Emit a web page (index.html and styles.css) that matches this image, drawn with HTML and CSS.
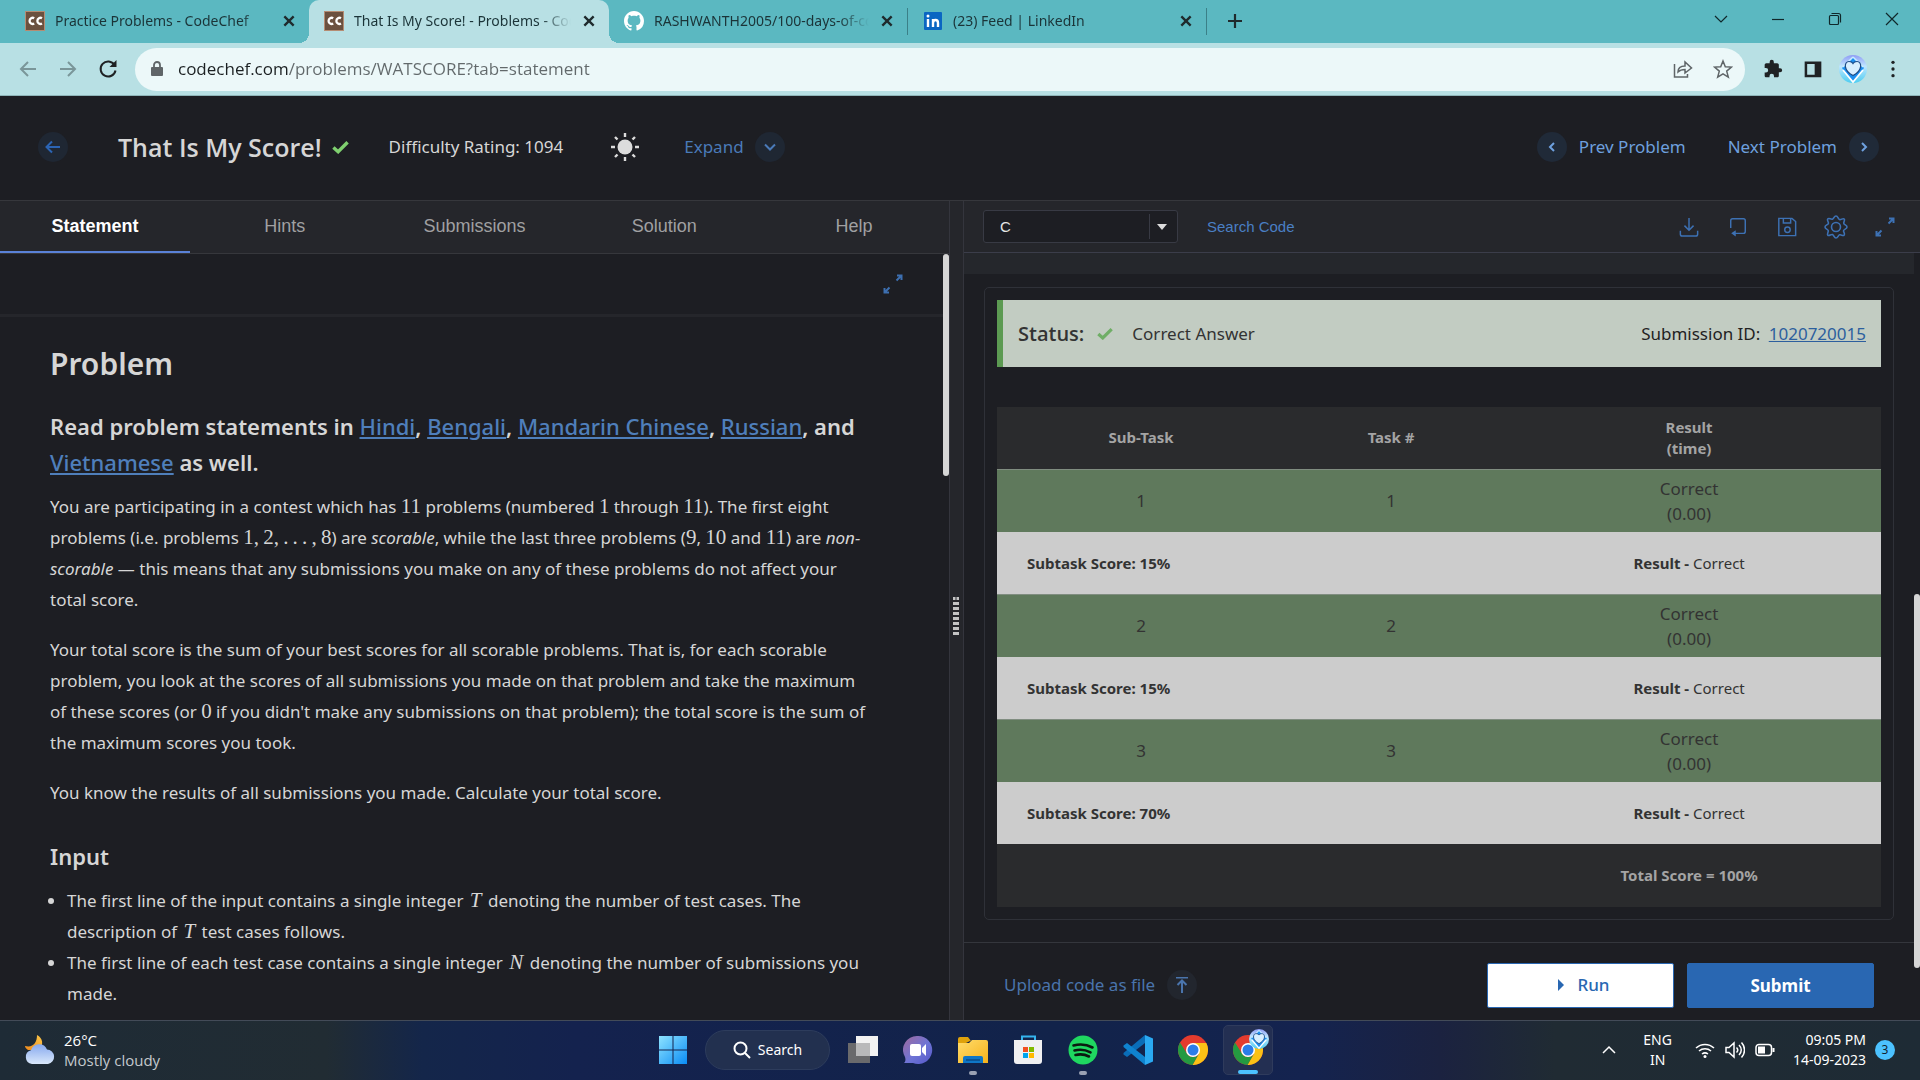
FILE: index.html
```html
<!DOCTYPE html>
<html lang="en">
<head>
<meta charset="utf-8">
<title>That Is My Score! - Problems - CodeChef</title>
<link rel="stylesheet" href="styles.css">
</head>
<body>
<svg class="defs" aria-hidden="true">
  <defs>
    <linearGradient id="win" x1="0" y1="0" x2="1" y2="1"><stop offset="0" stop-color="#8ee3ff"/><stop offset="1" stop-color="#0a8cf5"/></linearGradient>
    <linearGradient id="cloud" x1="0" y1="0" x2="0" y2="1"><stop offset="0" stop-color="#86a8ee"/><stop offset="1" stop-color="#d9e8fb"/></linearGradient>
    <linearGradient id="moon" x1="0" y1="1" x2="1" y2="0"><stop offset="0" stop-color="#f08a1c"/><stop offset="1" stop-color="#fbc84a"/></linearGradient>
    <linearGradient id="chat" x1="0" y1="0" x2="1" y2="1"><stop offset="0" stop-color="#a06a9c"/><stop offset=".55" stop-color="#6d74d6"/><stop offset="1" stop-color="#5557c8"/></linearGradient>
    <linearGradient id="folder" x1="0" y1="0" x2="1" y2="1"><stop offset="0" stop-color="#ffdc6b"/><stop offset="1" stop-color="#f6b21b"/></linearGradient>
    <linearGradient id="gem" x1="0" y1="0" x2="0" y2="1"><stop offset="0" stop-color="#8f9cf5"/><stop offset=".4" stop-color="#bfe6ff"/><stop offset="1" stop-color="#4ccdf2"/></linearGradient>
  </defs>
  <symbol id="i-close" viewBox="0 0 12 12"><path d="M2 2l8 8M10 2l-8 8" stroke="#1f2a2d" stroke-width="2" fill="none"/></symbol>
  <symbol id="i-expand" viewBox="0 0 20 20"><path d="M14 1.500h4.500V6M18.500 1.500L13.500 6.500M6 18.500H1.500V14M1.500 18.500l5-5" stroke="currentColor" stroke-width="2" fill="none"/></symbol>
  <symbol id="i-check" viewBox="0 0 18 14"><path d="M1.500 7.500l5 4.500L16.500 2" stroke="currentColor" stroke-width="3.600" fill="none"/></symbol>
  <symbol id="i-chef" viewBox="0 0 20 20"><rect x=".5" y=".5" width="19" height="19" fill="#6b513f" stroke="#b58c73"/><path d="M9.200 7.200A3.100 3.100 0 1 0 9.200 12.600M17 7.200A3.100 3.100 0 1 0 17 12.600" stroke="#fff" stroke-width="2.300" fill="none"/></symbol>
  <symbol id="i-chrome" viewBox="0 0 30 30"><circle cx="15" cy="15" r="15" fill="#e33b2e"/><path d="M15 8h13.300A15 15 0 0 1 14.500 30L21.100 18.500z" fill="#fbc116"/><path d="M2 7.500L8.900 18.500a7 7 0 0 0 12.200 0L14.500 30A15 15 0 0 1 2 7.500z" fill="#249a41"/><circle cx="15" cy="15" r="7" fill="#fff"/><circle cx="15" cy="15" r="5.500" fill="#2b7de9"/></symbol>
  <symbol id="i-gem" viewBox="0 0 28 28"><circle cx="14" cy="14" r="14" fill="url(#gem)"/><path d="M14 2l11 11-11 14L3 13z" fill="#1c8ff0"/><path d="M4 15l10 12 10-12" stroke="#fff" stroke-width="1.800" fill="none"/><path d="M14 2L4 12M14 2l10 10" stroke="#c8ecff" stroke-width="1.500"/><path d="M14 20.500c-10-5-9-14-4-14 2 0 3.500 1 4 2 .5-1 2-2 4-2 5 0 6 9-4 14z" fill="#d8efff" stroke="#1d4b86" stroke-width="1.200"/></symbol>
</svg>

<div class="tabstrip">
  <div class="tab"><svg class="fav"><use href="#i-chef"/></svg><span class="tab-title">Practice Problems - CodeChef</span><button class="tab-close" aria-label="Close tab"><svg><use href="#i-close"/></svg></button></div>
  <div class="tab active"><svg class="fav"><use href="#i-chef"/></svg><span class="tab-title">That Is My Score! - Problems - CodeChef</span><button class="tab-close" aria-label="Close tab"><svg><use href="#i-close"/></svg></button></div>
  <div class="tab sep"><svg class="fav" viewBox="0 0 16 16"><path fill="#fff" d="M8 0C3.580 0 0 3.580 0 8c0 3.540 2.290 6.530 5.470 7.590.4.070.55-.17.55-.38 0-.19-.01-.82-.01-1.490-2.010.37-2.530-.49-2.690-.94-.09-.23-.48-.94-.82-1.130-.28-.15-.68-.52-.01-.53.63-.01 1.080.58 1.230.82.72 1.210 1.870.87 2.330.66.07-.52.28-.87.51-1.070-1.780-.2-3.640-.89-3.640-3.950 0-.87.31-1.590.82-2.150-.08-.2-.36-1.020.08-2.120 0 0 .67-.21 2.200.82.64-.18 1.320-.27 2-.27s1.360.09 2 .27c1.530-1.040 2.200-.82 2.200-.82.44 1.100.16 1.920.08 2.120.51.56.82 1.270.82 2.150 0 3.070-1.870 3.750-3.650 3.950.29.25.54.73.54 1.480 0 1.070-.01 1.930-.01 2.200 0 .21.15.46.55.38A8.010 8.010 0 0 0 16 8c0-4.420-3.580-8-8-8z"/></svg><span class="tab-title">RASHWANTH2005/100-days-of-code</span><button class="tab-close" aria-label="Close tab"><svg><use href="#i-close"/></svg></button></div>
  <div class="tab sep"><svg class="fav" viewBox="0 0 20 20"><rect x="1" y="1" width="18" height="18" rx="1" fill="#0a66c2"/><path d="M5 8v8M10 16V8M10 12c0-4 5-4 5 0v4" stroke="#fff" stroke-width="2.400" fill="none"/><circle cx="5" cy="5" r="1.500" fill="#fff"/></svg><span class="tab-title">(23) Feed | LinkedIn</span><button class="tab-close" aria-label="Close tab"><svg><use href="#i-close"/></svg></button></div>
  <button class="new-tab" aria-label="New tab"><svg viewBox="0 0 16 16"><path d="M8 1v14M1 8h14" stroke="#1f2a2d" stroke-width="2.200"/></svg></button>
  <div class="window-controls">
    <button aria-label="Search tabs"><svg viewBox="0 0 14 14"><path d="M1 4l6 6 6-6" /></svg></button>
    <button aria-label="Minimize"><svg viewBox="0 0 14 14"><path d="M1 7.500h12"/></svg></button>
    <button aria-label="Restore"><svg viewBox="0 0 14 14"><rect x="1.500" y="3.500" width="9" height="9" rx="1"/><path d="M3.500 1.500h7a2 2 0 0 1 2 2v7"/></svg></button>
    <button aria-label="Close"><svg viewBox="0 0 14 14"><path d="M1 1l12 12M13 1L1 13"/></svg></button>
  </div>
</div>

<div class="toolbar">
  <button class="nav dim" aria-label="Back"><svg viewBox="0 0 20 20"><path d="M18 10H3M10 3l-7 7 7 7"/></svg></button>
  <button class="nav dim" aria-label="Forward"><svg viewBox="0 0 20 20"><path d="M2 10h15M10 3l7 7-7 7"/></svg></button>
  <button class="nav" aria-label="Reload"><svg viewBox="0 0 20 20"><path d="M16.500 6A7.500 7.500 0 1 0 17.500 11.500" /><path d="M18.500 1v7h-7z" fill="#1f2224" stroke="none"/></svg></button>
  <div class="omnibox">
    <svg class="lock" viewBox="0 0 12 16"><rect x="0" y="6" width="12" height="9" rx="1" fill="#5f6568"/><path d="M3 7V4a3 3 0 0 1 6 0v3" stroke="#5f6568" stroke-width="1.800" fill="none"/></svg>
    <input class="url" type="text" aria-label="Address" value="codechef.com/problems/WATSCORE?tab=statement">
    <button aria-label="Share"><svg viewBox="0 0 20 20"><path d="M1.500 5v13h13v-3M5 13c0-4 3-6 7-6V3l6.500 6-6.500 5v-3.500c-3 0-5 .5-7 2.500z"/></svg></button>
    <button aria-label="Bookmark"><svg viewBox="0 0 20 20"><path d="M10 2l2.300 5.700 6.200.4-4.800 4 1.600 6L10 14.800 4.700 18.100l1.600-6-4.800-4 6.200-.4z"/></svg></button>
  </div>
  <button class="ext" aria-label="Extensions"><svg viewBox="0 0 24 24"><path fill="#1f2224" d="M20.500 11H19V7c0-1.100-.9-2-2-2h-4V3.500a2.500 2.500 0 0 0-5 0V5H4c-1.100 0-2 .9-2 2v3.800h1.500a2.700 2.700 0 0 1 0 5.400H2V20c0 1.100.9 2 2 2h3.800v-1.500a2.700 2.700 0 0 1 5.400 0V22H17c1.100 0 2-.9 2-2v-4h1.500a2.500 2.500 0 0 0 0-5z"/></svg></button>
  <button class="ext" aria-label="Side panel"><svg viewBox="0 0 24 24"><path fill="#1f2224" fill-rule="evenodd" d="M2 3h20v19H2zM5 6v13h9V6z"/></svg></button>
  <button class="ext wide" aria-label="Profile"><svg><use href="#i-gem"/></svg></button>
  <button class="ext" aria-label="Menu"><svg viewBox="0 0 24 24" fill="#1f2224"><circle cx="12" cy="4" r="2"/><circle cx="12" cy="12" r="2"/><circle cx="12" cy="20" r="2"/></svg></button>
</div>

<header class="problem-bar">
  <button class="round back" aria-label="Back"><svg viewBox="0 0 16 16"><path d="M15 8H2M7 2.500L1.500 8 7 13.500"/></svg></button>
  <h1>That Is My Score!</h1>
  <svg class="solved"><use href="#i-check"/></svg>
  <span class="rating">Difficulty Rating: 1094</span>
  <button class="theme" aria-label="Theme"><svg viewBox="0 0 28 28"><circle cx="14" cy="14" r="7.500" fill="#dcdcdc"/><path d="M14 0v4M14 24v4M0 14h4M24 14h4M4 4l2.500 2.500M21.500 21.500L24 24M24 4l-2.500 2.500M6.500 21.500L4 24" stroke="#dcdcdc" stroke-width="2.400"/></svg></button>
  <button class="expand">Expand <span class="round"><svg viewBox="0 0 16 16"><path d="M3 5.500l5 5 5-5"/></svg></span></button>
  <nav class="pager">
    <a href="#prev"><span class="round"><svg viewBox="0 0 16 16"><path d="M10 4L6 8l4 4"/></svg></span>Prev Problem</a>
    <a href="#next">Next Problem<span class="round"><svg viewBox="0 0 16 16"><path d="M6 4l4 4-4 4"/></svg></span></a>
  </nav>
</header>

<main class="split">
  <section class="left">
    <nav class="tabs">
      <a class="current" href="#statement">Statement</a><a href="#hints">Hints</a><a href="#submissions">Submissions</a><a href="#solution">Solution</a><a href="#help">Help</a>
    </nav>
    <div class="statement">
      <div class="scroll-thumb"></div>
      <div class="statement-tools"><button aria-label="Full screen"><svg><use href="#i-expand"/></svg></button></div>
      <article>
        <h2>Problem</h2>
        <h3>Read problem statements in <a href="#hi">Hindi</a>, <a href="#bn">Bengali</a>, <a href="#zh">Mandarin Chinese</a>, <a href="#ru">Russian</a>, and <a href="#vi">Vietnamese</a> as well.</h3>
        <p>You are participating in a contest which has <span class="math">11</span> problems (numbered <span class="math">1</span> through <span class="math">11</span>). The first eight problems (i.e. problems <span class="math">1,&#8201;2,&#8201;.&#8201;.&#8201;.&#8201;,&#8201;8</span>) are <em>scorable</em>, while the last three problems (<span class="math">9</span>, <span class="math">10</span> and <span class="math">11</span>) are <em>non-scorable</em> — this means that any submissions you make on any of these problems do not affect your total score.</p>
        <p>Your total score is the sum of your best scores for all scorable problems. That is, for each scorable problem, you look at the scores of all submissions you made on that problem and take the maximum of these scores (or <span class="math">0</span> if you didn't make any submissions on that problem); the total score is the sum of the maximum scores you took.</p>
        <p>You know the results of all submissions you made. Calculate your total score.</p>
        <h3 class="sub">Input</h3>
        <ul>
          <li>The first line of the input contains a single integer <i class="math">T</i> denoting the number of test cases. The description of <i class="math">T</i> test cases follows.</li>
          <li>The first line of each test case contains a single integer <i class="math">N</i> denoting the number of submissions you made.</li>
        </ul>
      </article>
    </div>
  </section>

  <div class="gutter"><span class="grip"></span></div>

  <section class="right">
    <div class="scroll-thumb"></div>
    <div class="editor-bar">
      <div class="lang"><select aria-label="Language"><option>C</option></select><span class="arrow"></span></div>
      <a class="search-code" href="#search">Search Code</a>
      <div class="tools">
        <button aria-label="Download"><svg viewBox="0 0 22 22"><path d="M11 1v13M6 9.500l5 5 5-5M1.500 15v4a2 2 0 0 0 2 2h15a2 2 0 0 0 2-2v-4"/></svg></button>
        <button aria-label="Reset"><svg viewBox="0 0 22 22"><path d="M3 12V4a2 2 0 0 1 2-2h12a2 2 0 0 1 2 2v12a2 2 0 0 1-2 2H6"/><path d="M8.500 14.500v7L3.500 18z" fill="currentColor" stroke="none"/></svg></button>
        <button aria-label="Save"><svg viewBox="0 0 22 22"><path d="M2 1.500h14.500L20.500 5v15.500H2zM7 1.500v5h8v-5"/><circle cx="11.500" cy="14" r="3"/></svg></button>
        <button class="gear" aria-label="Settings"><svg viewBox="0 0 24 24"><path d="M12 1c2 0 2 3 3.500 3.600S19 2.700 20.200 4s-.9 3-.4 4.500S23 10 23 12s-2.800 2-3.400 3.500 2 3.500.6 4.700-3-.9-4.600-.4S14 23 12 23s-2-2.800-3.500-3.400-3.500 2-4.700.6.900-3 .4-4.600S1 14 1 12s2.800-2 3.400-3.500-2-3.500-.6-4.700 3 .9 4.600.4S10 1 12 1z"/><circle cx="12" cy="12" r="4.500"/></svg></button>
        <button aria-label="Full screen"><svg><use href="#i-expand"/></svg></button>
      </div>
    </div>
    <div class="console-edge"></div>
    <div class="results">
      <div class="card">
        <div class="status">
          <strong>Status:</strong>
          <svg class="ok"><use href="#i-check"/></svg>
          <span class="verdict">Correct Answer</span>
          <span class="sid">Submission ID: <a href="#submission">1020720015</a></span>
        </div>
        <table>
          <colgroup><col class="c1"><col class="c2"><col class="c3"></colgroup>
          <thead><tr><th>Sub-Task</th><th>Task #</th><th>Result<br>(time)</th></tr></thead>
          <tbody>
            <tr class="pass"><td>1</td><td>1</td><td>Correct<br>(0.00)</td></tr>
            <tr class="score"><td colspan="2"><b>Subtask Score: 15%</b></td><td><b>Result - </b>Correct</td></tr>
            <tr class="pass"><td>2</td><td>2</td><td>Correct<br>(0.00)</td></tr>
            <tr class="score"><td colspan="2"><b>Subtask Score: 15%</b></td><td><b>Result - </b>Correct</td></tr>
            <tr class="pass"><td>3</td><td>3</td><td>Correct<br>(0.00)</td></tr>
            <tr class="score"><td colspan="2"><b>Subtask Score: 70%</b></td><td><b>Result - </b>Correct</td></tr>
          </tbody>
          <tfoot><tr><th colspan="2"></th><th>Total Score = 100%</th></tr></tfoot>
        </table>
      </div>
    </div>
    <footer class="actions">
      <button class="upload">Upload code as file <span class="round"><svg viewBox="0 0 16 16"><path d="M2 0.500h12M8 16V3.500M3.500 8L8 3.500 12.500 8"/></svg></span></button>
      <button class="run"><span class="play"></span>Run</button>
      <button class="submit">Submit</button>
    </footer>
  </section>
</main>

<div class="taskbar">
  <div class="weather">
    <svg viewBox="0 0 30 30"><path d="M12 0c6 3 7 10 2 15H3c-2-1-3-3-3-4 8 2 12-3 12-11z" fill="url(#moon)"/><path d="M7 29a7 7 0 0 1-1-13.700A8.500 8.500 0 0 1 22 14.500 7.300 7.300 0 0 1 23 29z" fill="url(#cloud)"/></svg>
    <div class="lines"><span>26°C</span><span class="muted">Mostly cloudy</span></div>
  </div>
  <div class="apps">
    <button aria-label="Start"><svg viewBox="0 0 28 28"><path d="M0 0h13.500v13.500H0zM14.500 0H28v13.500H14.500zM0 14.500h13.500V28H0zM14.500 14.500H28V28H14.500z" fill="url(#win)"/></svg></button>
    <button class="search"><svg viewBox="0 0 18 18"><circle cx="7.500" cy="7.500" r="6"/><path d="M12 12l5 5"/></svg>Search</button>
    <button aria-label="Task view"><svg viewBox="0 0 30 30"><rect x="0" y="8" width="22" height="20" fill="#6a6a6c"/><rect x="8" y="1" width="22" height="20" fill="#f2f2f2"/><path d="M8 8h14v13H8z" fill="#b9b9ba"/></svg></button>
    <button aria-label="Chat"><svg viewBox="0 0 30 30"><path d="M15 1a14 14 0 1 1-5 27H1c2-2 1.500-4 1-6A14 14 0 0 1 15 1z" fill="url(#chat)"/><rect x="7" y="9" width="11" height="12" rx="2" fill="#fff"/><path d="M19 13l4-4v12l-4-4z" fill="#fff"/></svg></button>
    <button class="open" aria-label="File Explorer"><svg viewBox="0 0 30 30"><path d="M0 4a2 2 0 0 1 2-2h8l3 4h-1L0 12z" fill="#dfa20c"/><path d="M0 8h11l3-3h14a2 2 0 0 1 2 2v21H0z" fill="url(#folder)"/><path d="M5 28v-5a2 2 0 0 1 2-2h16a2 2 0 0 1 2 2v5z" fill="#0f76c6"/><path d="M8 25h14" stroke="#0a4b87" stroke-width="1.500"/></svg></button>
    <button aria-label="Store"><svg viewBox="0 0 30 30"><path d="M9 7V1.500h13V7" stroke="#34b4ef" stroke-width="2" fill="none"/><path d="M1 5h28v21a3 3 0 0 1-3 3H4a3 3 0 0 1-3-3z" fill="#f0f0f2"/><path d="M10 12h5v5h-5z" fill="#f25022"/><path d="M16 12h5v5h-5z" fill="#7fba00"/><path d="M10 18h5v5h-5z" fill="#00a4ef"/><path d="M16 18h5v5h-5z" fill="#ffb900"/></svg></button>
    <button class="open" aria-label="Spotify"><svg viewBox="0 0 30 30"><circle cx="15" cy="15" r="14.500" fill="#1fd760"/><path d="M5.500 10.500c7-2 13.500-1 19 2M6.500 15.500c6-1.600 11-.8 16 1.800M7.500 20c5-1.200 9.500-.6 13.500 1.500" stroke="#0b1a10" stroke-width="2.600" fill="none" stroke-linecap="round"/></svg></button>
    <button aria-label="Visual Studio Code"><svg viewBox="0 0 30 30"><path d="M22 0v8L4 22l-3.500-2.500v-1.500z" fill="#0a6db8"/><path d="M22 30v-8L4 8 .5 10.500V12z" fill="#0f83cf"/><path d="M22 0l8 3.500v23L22 30z" fill="#2aa9f2"/></svg></button>
    <button aria-label="Chrome"><svg><use href="#i-chrome"/></svg></button>
    <button class="focused" aria-label="Chrome window"><svg><use href="#i-chrome"/></svg><svg class="badge"><use href="#i-gem"/></svg></button>
  </div>
  <div class="tray">
    <svg class="chev" viewBox="0 0 14 14"><path d="M1 10l6-6 6 6"/></svg>
    <div class="lines lang-id"><span>ENG</span><span>IN</span></div>
    <svg class="sys" viewBox="0 0 20 20"><path d="M1 8a13 13 0 0 1 18 0M4 11a9 9 0 0 1 12 0M7 14a5 5 0 0 1 6 0"/><circle cx="10" cy="16.500" r="1.500" fill="#fff" stroke="none"/></svg>
    <svg class="sys" viewBox="0 0 20 20"><path d="M1 7.500h3L9 3v14l-5-4.500H1zM11.500 7.500c1.500 1.500 1.500 3.500 0 5M14 5c3 3 3 7 0 10M16.500 2.500c4 4.500 4 10.500 0 15"/></svg>
    <svg class="sys" viewBox="0 0 20 20"><rect x="1" y="4.500" width="15.500" height="11" rx="3"/><path d="M3 6.500h7v7H3zM17.500 8h2v4h-2z" fill="#fff" stroke="none"/></svg>
    <div class="lines clock"><span>09:05 PM</span><span>14-09-2023</span></div>
    <span class="count">3</span>
  </div>
</div>
</body>
</html>
```
FILE: styles.css
```css
* { box-sizing: border-box; }

body {
  margin: 0;
  height: 100vh;
  display: flex;
  flex-direction: column;
  overflow: hidden;
  background: #1d1e23;
  color: #d6d6d6;
  font: 17px/24px "Noto Sans", "Open Sans", sans-serif;
}

button {
  border: 0;
  padding: 0;
  background: none;
  font: inherit;
  color: inherit;
  display: flex;
  align-items: center;
  justify-content: center;
}

svg { display: block; flex: none; }
.defs { position: absolute; width: 0; height: 0; }
a { color: inherit; text-decoration: none; }

/* Browser tabs */
.tabstrip {
  height: 43px;
  flex: none;
  display: flex;
  padding-left: 10px;
  background: #5bb8c1;
  color: #1b3438;
  font: 14px/20px "Noto Sans", "Open Sans", sans-serif;
}
.tab {
  flex: 0 1 299px;
  min-width: 0;
  display: flex;
  align-items: center;
  gap: 10px;
  padding: 0 12px 2px 15px;
  position: relative;
}
.tab.active { background: #b8e0e4; border-radius: 10px 10px 0 0; flex-basis: 300px; }
.tab.active::before,
.tab.active::after {
  content: "";
  position: absolute;
  bottom: 0;
  width: 10px;
  height: 10px;
}
.tab.active::before { right: 100%; background: radial-gradient(circle at 0 0, transparent 10px, #b8e0e4 10px); }
.tab.active::after { left: 100%; background: radial-gradient(circle at 100% 0, transparent 10px, #b8e0e4 10px); }
.tab.sep { border-right: 1px solid #3b8088; border-image: linear-gradient(transparent 9px, #3b8088 9px 34px, transparent 34px) 1; }
.fav { width: 20px; height: 20px; }
.tab-title {
  flex: 1;
  overflow: hidden;
  white-space: nowrap;
  -webkit-mask-image: linear-gradient(90deg, #000 calc(100% - 30px), transparent);
  mask-image: linear-gradient(90deg, #000 calc(100% - 30px), transparent);
}
.tab-close { width: 16px; height: 16px; }
.tab-close svg { width: 14px; height: 14px; }
.new-tab { width: 56px; padding-bottom: 2px; }
.new-tab svg { width: 16px; height: 16px; }
.window-controls { margin-left: auto; display: flex; height: 37px; }
.window-controls button { width: 57px; }
.window-controls svg { width: 14px; height: 14px; fill: none; stroke: #10282b; stroke-width: 1.200; }

/* Browser toolbar */
.toolbar {
  height: 53px;
  flex: none;
  display: flex;
  align-items: center;
  padding: 0 7px 0 8px;
  background: #b8e0e4;
  border-bottom: 1px solid #8fb5b9;
}
.nav { width: 40px; height: 40px; }
.nav svg { width: 20px; height: 20px; fill: none; stroke: #1f2224; stroke-width: 2; }
.nav.dim svg { stroke: #7a9699; }
.omnibox {
  flex: 1;
  height: 43px;
  margin: 0 8px 0 7px;
  padding: 0 2px 0 16px;
  display: flex;
  align-items: center;
  border-radius: 22px;
  background: #ecf8f9;
}
.lock { width: 12px; height: 16px; margin-right: 15px; }
.url {
  flex: 1;
  min-width: 0;
  border: 0;
  padding: 0;
  outline: 0;
  font: 17px/24px "Open Sans", "Noto Sans", sans-serif;
  color: transparent;
  background: linear-gradient(90deg, #1b2022 111px, #62696b 111px);
  -webkit-background-clip: text;
  background-clip: text;
}
.omnibox button { width: 40px; height: 40px; }
.omnibox button svg { width: 20px; height: 20px; fill: none; stroke: #5f6568; stroke-width: 1.500; }
.ext { width: 40px; height: 40px; }
.ext svg { width: 20px; height: 20px; }
.ext.wide svg { width: 28px; height: 28px; }

/* Problem title bar */
.problem-bar {
  height: 105px;
  flex: none;
  display: flex;
  align-items: center;
  padding: 0 41px 2px 38px;
  border-bottom: 1px solid #36373c;
}
.round {
  width: 30px;
  height: 30px;
  border-radius: 50%;
  display: flex;
  align-items: center;
  justify-content: center;
  background: #1f2733;
}
.round svg { width: 16px; height: 16px; fill: none; stroke: currentColor; stroke-width: 2; }
.back { color: #2b64b4; }
h1 { margin: 0 10px 0 50px; font: 600 25px/34px "Open Sans", "Noto Sans", sans-serif; }
.solved { width: 17px; height: 14px; color: #7fd06f; }
.rating { margin-left: 40px; }
.theme { margin-left: 48px; }
.theme svg { width: 28px; height: 28px; }
.expand { margin-left: 45px; gap: 11px; color: #4a7ab8; }
.pager { margin-left: auto; display: flex; gap: 42px; color: #6ea0de; }
.pager a { display: flex; align-items: center; gap: 12px; }
.pager .round { background: #202a38; }

/* Two panes */
.split { flex: 1; min-height: 0; display: flex; }
.left {
  flex: 0 0 calc(50% - 10px);
  display: flex;
  flex-direction: column;
  border-right: 1px solid #34353d;
  min-width: 0;
}
.tabs {
  height: 53px;
  flex: none;
  display: grid;
  grid-template-columns: repeat(5, 20%);
  background: #25262b;
  border-bottom: 1px solid #36373c;
  font: 18px/24px "Liberation Sans", Arial, sans-serif;
  color: #a0a0a2;
}
.tabs a { display: flex; align-items: center; justify-content: center; border-bottom: 2px solid transparent; }
.tabs .current { color: #fff; font-weight: 700; border-color: #5a82d8; }
.statement { flex: 1; min-height: 0; overflow: hidden; position: relative; }
.scroll-thumb { position: absolute; right: 0; width: 6px; border-radius: 3px; background: #d6d6d6; }
.left .scroll-thumb { top: 0; height: 29%; }
.statement-tools {
  height: 63px;
  margin-right: 6px;
  padding-right: 40px;
  display: flex;
  align-items: center;
  justify-content: flex-end;
  border-bottom: 3px solid #25262b;
  color: #3d6fb0;
}
.statement-tools svg, .tools svg { width: 20px; height: 20px; }
article { padding: 27px 76px 0 50px; }
h2 { margin: 0 0 24px; font-size: 30px; line-height: 40px; font-weight: 600; }
h3 { margin: 0 0 11px; font-size: 22px; line-height: 36px; font-weight: 600; }
h3.sub { margin-top: 30px; }
h3 a { color: #4f7fbb; text-decoration: underline; font-weight: 500; }
article p, article li { line-height: 31px; }
article p { margin: 0 0 19px; }
article ul { margin: 0; padding-left: 17px; }
.math { font-family: "Liberation Serif", "Times New Roman", serif; font-size: 21px; line-height: 24px; }
i.math { padding: 0 2px; }

.gutter { width: 13px; flex: none; background: #25262b; display: flex; justify-content: center; align-items: center; }
.grip {
  width: 6px;
  height: 38px;
  margin: 0 1px -10px 0;
  background:
    linear-gradient(90deg, transparent 2px, #77787b 2px 4px, transparent 4px) 0 0 / 6px 3px no-repeat,
    repeating-linear-gradient(#c4c4c4 0 3px, transparent 3px 5px);
}

/* Code pane */
.right { flex: 1; min-width: 0; display: flex; flex-direction: column; border-left: 1px solid #34353d; position: relative; }
.right > .scroll-thumb { top: 48%; bottom: 52px; }
.editor-bar {
  height: 52px;
  flex: none;
  display: flex;
  align-items: center;
  padding: 0 25px 0 19px;
  background: #25262b;
  border-bottom: 1px solid #3b3d4a;
}
.lang {
  width: 195px;
  height: 33px;
  display: flex;
  align-items: center;
  border: 1px solid #383a44;
  border-radius: 3px;
  background: #1d1e23;
  position: relative;
}
.lang select {
  width: 100%;
  height: 100%;
  padding: 0 44px 0 16px;
  border: 0;
  appearance: none;
  background: none;
  color: #e6e6e6;
  font: 15px/20px "Liberation Sans", Arial, sans-serif;
}
.arrow {
  position: absolute;
  right: 0;
  width: 28px;
  height: 25px;
  padding-right: 3px;
  border-left: 1px solid #383a44;
  pointer-events: none;
  display: flex;
  align-items: center;
  justify-content: center;
}
.arrow::after { content: ""; border: 5px solid transparent; border-top: 6px solid #dcdcdc; border-bottom: 0; }
.search-code { margin-left: 29px; font: 15px/20px "Liberation Sans", Arial, sans-serif; color: #4a7fc4; }
.tools { margin-left: auto; display: flex; gap: 29px; color: #3d71b4; }
.tools button svg { fill: none; stroke: currentColor; stroke-width: 1.600; }
.tools .gear svg { width: 24px; height: 24px; margin: 0 -2px; }
.console-edge { height: 21px; flex: none; margin-right: 6px; background: #25272c; }
.results { flex: 1; min-height: 0; overflow: hidden; padding: 13px 26px 0 20px; }
.card { padding: 12px; border: 1px solid #2f3138; border-radius: 5px; }
.status {
  height: 67px;
  margin-bottom: 40px;
  display: flex;
  align-items: center;
  padding: 0 15px;
  background: #c2ccc2;
  border-left: 6px solid #5c9a52;
  color: #333;
}
.status strong { font: 600 20px/28px "Open Sans", "Noto Sans", sans-serif; }
.ok { width: 16px; height: 13px; margin: 0 19px 0 13px; color: #6fae66; }
.sid { margin-left: auto; color: #222; }
.sid a { margin-left: 4px; color: #2d5f9e; text-decoration: underline; }

table { width: 100%; border-collapse: collapse; table-layout: fixed; color: #333; }
.c1 { width: 288px; }
.c2 { width: 24%; }
th, td { padding: 0; text-align: center; }
th { height: 62px; background: #2a2b2d; color: #a4a4a4; font-size: 15px; line-height: 21px; font-weight: 700; }
tfoot th { height: 63px; }
.pass td { height: 63px; line-height: 25px; background: #5f795c; border-top: 1px solid #808d80; }
.score td { height: 62px; background: #ccc; font-size: 15px; }
.score td:first-child { text-align: left; padding-left: 30px; }

.actions {
  flex: none;
  margin-right: 6px;
  padding: 20px 40px 12px;
  display: flex;
  align-items: center;
  border-top: 1px solid #34363c;
}
.upload { gap: 12px; margin-right: auto; padding-bottom: 2px; color: #4a74ac; }
.upload .round { background: #22262e; }
.run, .submit { width: 187px; height: 45px; border-radius: 2px; border: 1px solid #2967b2; }
.run { gap: 13px; padding: 0 0 1px 7px; background: #fff; color: #2967b2; font-weight: 500; margin-right: 13px; }
.play { border: 6px solid transparent; border-left: 6px solid #2967b2; border-right: 0; }
.submit { background: #2967b2; color: #fff; font-weight: 700; }

/* Taskbar */
.taskbar {
  height: 60px;
  flex: none;
  display: grid;
  grid-template-columns: 1fr auto 1fr;
  align-items: center;
  padding-bottom: 2px;
  border-top: 1px solid #434b58;
  background: linear-gradient(90deg, #1e2b36 0, #212c33 17%, #14264a 22%, #14224e 30%, #12234a 55%, #14234f 68%, #1b2240 75%, #202b33 81%, #1e2b35);
  color: #fff;
  font-size: 15px;
  line-height: 20px;
}
.lines { display: flex; flex-direction: column; }
.weather { display: flex; align-items: center; gap: 9px; padding-left: 25px; font: 15px/20px "Open Sans", "Noto Sans", sans-serif; }
.weather svg { width: 30px; height: 30px; }
.muted { color: #c4c9cd; }
.apps { display: flex; align-items: center; }
.apps button { width: 55px; height: 50px; position: relative; }
.apps svg { width: 30px; height: 30px; }
.apps button:first-child svg { width: 28px; height: 28px; }
.apps .search { width: 125px; height: 40px; margin: 0 5px; gap: 7px; border-radius: 20px; border: 1px solid #2d3c5c; background: #22304f; font-size: 14px; }
.apps .search svg { width: 18px; height: 18px; fill: none; stroke: #fff; stroke-width: 2; }
.apps .open::after, .apps .focused::after {
  content: "";
  position: absolute;
  bottom: 0;
  width: 8px;
  height: 4px;
  border-radius: 2px;
  background: #9aa1b3;
}
.apps .focused { width: 50px; margin: 0 2px 0 3px; background: #232f52; border-radius: 5px; border: 1px solid #2f3b5c; }
.apps .focused::after { width: 20px; background: #4cc2ff; }
.apps .badge { position: absolute; top: 3px; right: 3px; width: 20px; height: 20px; }
.tray { display: flex; align-items: center; justify-content: flex-end; padding-right: 25px; font-size: 14px; }
.tray svg { fill: none; stroke: #fff; stroke-width: 1.500; }
.chev { width: 14px; height: 14px; margin-right: 27px; }
.lang-id { align-items: center; margin-right: 23px; }
.sys { width: 20px; height: 20px; margin-right: 10px; }
.clock { align-items: flex-end; margin: 0 9px 0 8px; font-size: 14px; }
.count { width: 20px; height: 20px; border-radius: 50%; background: #4cc2ff; color: #13222e; font-size: 12px; text-align: center; }
```
